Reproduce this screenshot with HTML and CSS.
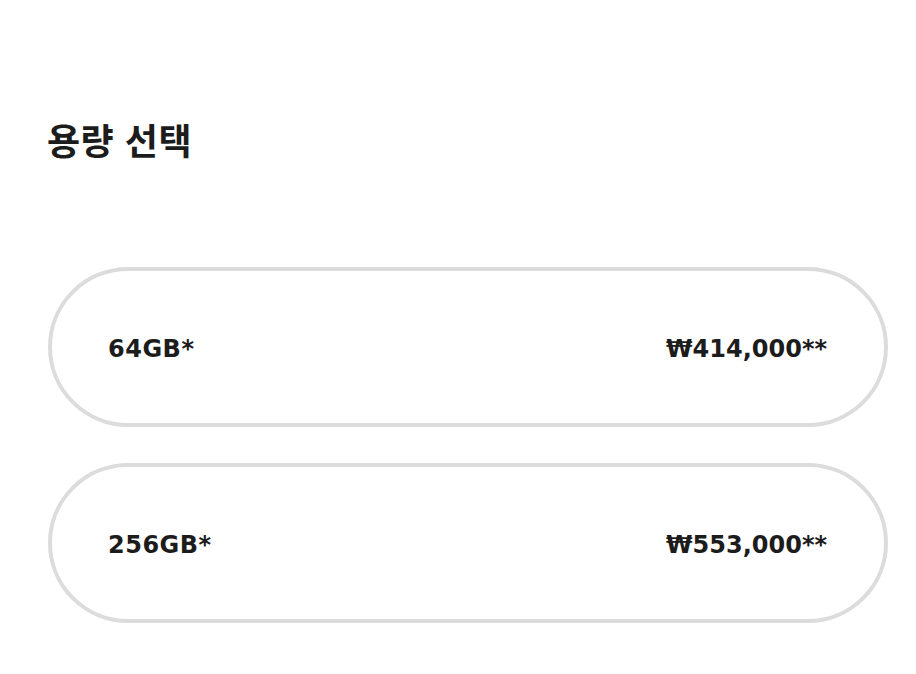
FILE: index.html
```html
<!DOCTYPE html>
<html lang="ko">
<head>
<meta charset="utf-8">
<title>용량 선택</title>
<link rel="stylesheet" href="styles.css">
</head>
<body>
<main class="page">
  <h2 class="title">용량 선택</h2>
  <ul class="options">
    <li class="option">
      <span class="size">64GB*</span>
      <span class="price">₩414,000**</span>
    </li>
    <li class="option">
      <span class="size">256GB*</span>
      <span class="price">₩553,000**</span>
    </li>
  </ul>
</main>
</body>
</html>
```
FILE: styles.css
```css
html, body {
  margin: 0;
  padding: 0;
  background: #ffffff;
}
.page {
  width: 840px;
  padding: 117px 0 0 48px;
  color: #1c1c1c;
}
.title {
  margin: 0;
  font-family: "Noto Sans CJK KR", "Noto Sans", sans-serif;
  font-weight: 700;
  font-size: 36px;
  line-height: 44px;
  letter-spacing: 0.5px;
  margin-left: -1px;
}
.options {
  list-style: none;
  margin: 106px 0 0;
  padding: 0;
  display: flex;
  flex-direction: column;
  gap: 36px;
}
.option {
  box-sizing: border-box;
  height: 160px;
  border: 4px solid #dcdcdc;
  border-radius: 80px;
  padding: 3px 57px 0 56px;
  display: flex;
  align-items: center;
  justify-content: space-between;
  font-family: "DejaVu Sans", "Noto Sans", sans-serif;
  font-weight: 700;
  font-size: 24px;
}
.size {
  letter-spacing: 0.5px;
}
.price {
  letter-spacing: 0;
}
```
